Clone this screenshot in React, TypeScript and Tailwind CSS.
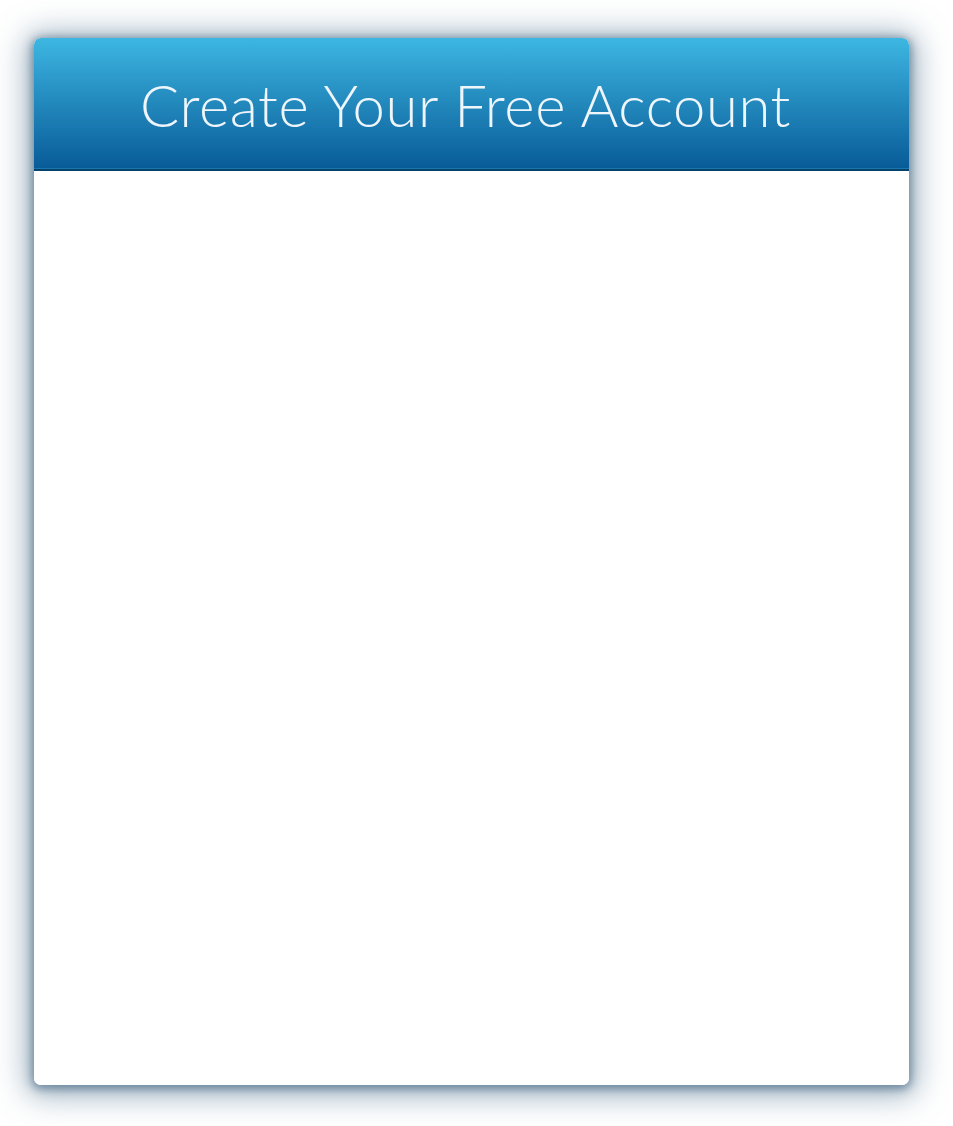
export default function App() {
  return (
    <div className="w-[953px] h-[1126px] bg-white pt-[38px] pl-[34px]">
      <div className="w-[875px] h-[1047px] bg-white rounded-[7px] overflow-hidden shadow-[0_2px_10px_2px_rgba(55,90,120,0.6),0_3px_30px_8px_rgba(70,110,140,0.5)] flex flex-col">
        <div className="h-[130px] bg-gradient-to-b from-[#3db7e2] to-[#085c98] flex items-center justify-center pr-[12px] pt-[3px]">
          <h1
            className="text-[58px] font-light text-[#eef6fc] tracking-[0.6px] leading-none"
            style={{ fontFamily: "Lato, 'Noto Sans', sans-serif" }}
          >
            Create Your Free Account
          </h1>
        </div>
        <div className="h-px bg-[#1a76b0]" />
        <div className="h-[2px] bg-[#06426a]" />
        <div className="flex-1 bg-white" />
      </div>
    </div>
  );
}
